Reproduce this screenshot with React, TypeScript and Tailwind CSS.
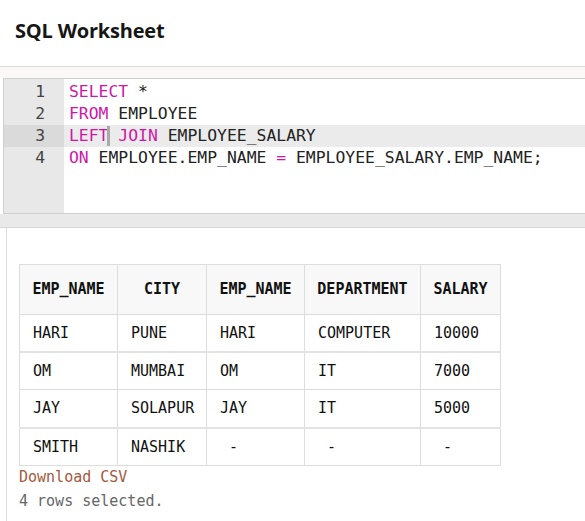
import React from "react";

const mono = { fontFamily: '"DejaVu Sans Mono", "Liberation Mono", monospace' };

const kw = "text-[#cf17a6]";

type Row = string[];

const headers = ["EMP_NAME", "CITY", "EMP_NAME", "DEPARTMENT", "SALARY"];
const widths = ["w-[98px]", "w-[89px]", "w-[98px]", "w-[116px]", "w-[80px]"];
const rows: Row[] = [
  ["HARI", "PUNE", "HARI", "COMPUTER", "10000"],
  ["OM", "MUMBAI", "OM", "IT", "7000"],
  ["JAY", "SOLAPUR", "JAY", "IT", "5000"],
  ["SMITH", "NASHIK", " -", " -", " -"],
];

function CodeLine({ n, active, children }: { n: number; active?: boolean; children: React.ReactNode }) {
  return (
    <div className={"flex h-[22px] items-center " + (active ? "bg-[#ebebeb]" : "")}>
      <div className={"w-[60px] shrink-0 pr-[19px] text-right text-[#444] h-full flex items-center justify-end " + (active ? "bg-[#dadada]" : "")}>
        {n}
      </div>
      <div className="pl-[5px] whitespace-pre text-[#222]">{children}</div>
    </div>
  );
}

export default function App() {
  return (
    <div className="w-[585px] h-[521px] overflow-hidden bg-white">
      <header className="h-[67px] border-b border-[#dedcda] flex items-center pl-[15px] pb-[5px]">
        <h1 className="text-[20px] font-bold text-[#161616] tracking-[-0.2px]" style={{ fontFamily: '"Open Sans", "Noto Sans", sans-serif' }}>
          SQL Worksheet
        </h1>
      </header>
      <div className="h-[11px] bg-[#faf9f8]" />
      <div className="ml-[3px] h-[136px] border border-r-0 border-[#cfcfcf] bg-white flex flex-col text-[16.4px]" style={mono}>
        <div className="relative flex-1 pt-[2px]">
          <div className="absolute left-0 top-0 bottom-0 w-[60px] bg-[#e8e8e8]" />
          <div className="relative">
            <CodeLine n={1}>
              <span className={kw}>SELECT</span> *
            </CodeLine>
            <CodeLine n={2}>
              <span className={kw}>FROM</span> EMPLOYEE
            </CodeLine>
            <CodeLine n={3} active>
              <span className={kw}>LEFT</span>
              <span className="inline-block w-[3px] h-[20px] bg-[#aaa] align-middle -ml-[1px] -mr-[2px]" />
              {" "}
              <span className={kw}>JOIN</span> EMPLOYEE_SALARY
            </CodeLine>
            <CodeLine n={4}>
              <span className={kw}>ON</span> EMPLOYEE.EMP_NAME <span className={kw}>=</span> EMPLOYEE_SALARY.EMP_NAME;
            </CodeLine>
          </div>
        </div>
      </div>
      <div className="h-[14px] bg-[#e9e9e9] border-b border-[#d6d6d6]" />
      <section className="ml-[6px] border-l border-[#dcdcdc] pl-[12px] pt-[36px] h-[300px]" style={mono}>
        <table className="border-collapse text-[15px] text-[#111]">
          <thead>
            <tr className="h-[50px] bg-[#f8f8f8]">
              {headers.map((h, i) => (
                <th key={i} className={"border border-[#dddddd] font-bold text-center " + widths[i]}>
                  {h}
                </th>
              ))}
            </tr>
          </thead>
          <tbody>
            {rows.map((r, ri) => (
              <tr
                key={ri}
                className={(ri === 0 ? "h-[37px] " : "h-[38px] ") + (ri === 1 || ri === 3 ? "border-t-2 border-t-[#e3e3e3]" : "")}
              >
                {r.map((c, ci) => (
                  <td key={ci} className="border border-[#dddddd] pl-[13px] whitespace-pre">
                    {c}
                  </td>
                ))}
              </tr>
            ))}
          </tbody>
        </table>
        <div className="text-[15px] leading-[22px] text-[#a4583e]">Download CSV</div>
        <div className="mt-[2px] text-[15px] leading-[22px] text-[#666]">4 rows selected.</div>
      </section>
    </div>
  );
}
